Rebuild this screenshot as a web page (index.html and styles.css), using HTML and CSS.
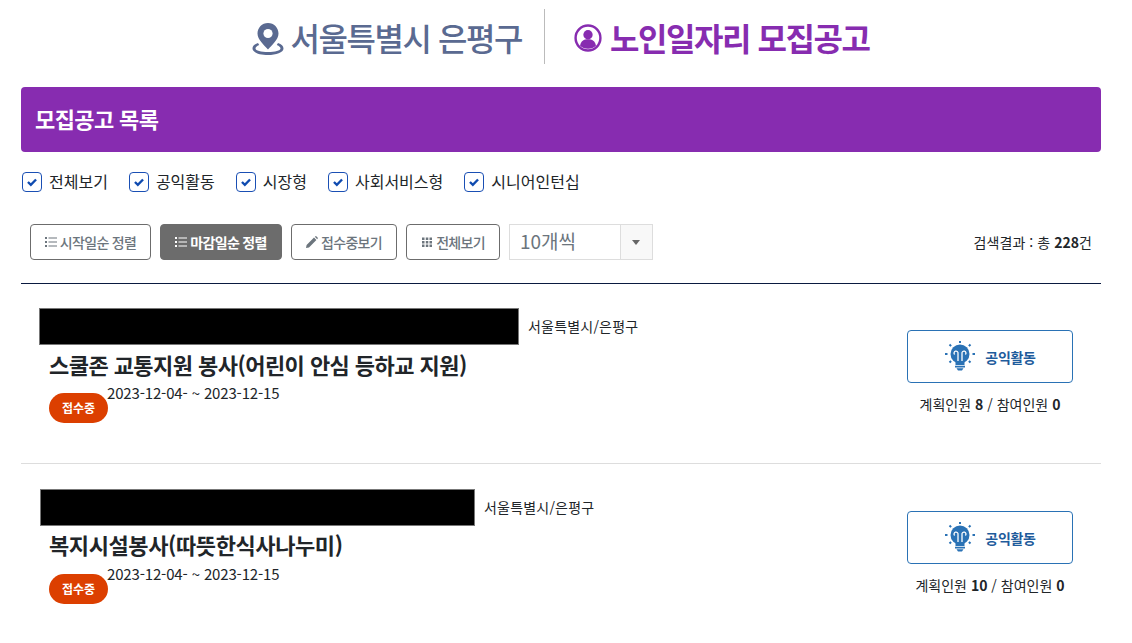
FILE: index.html
```html
<!DOCTYPE html>
<html lang="ko">
<head>
<meta charset="utf-8">
<title>노인일자리 모집공고</title>
<link rel="stylesheet" href="styles.css">
</head>
<body>
<header class="top">
  <div class="top-side top-region">
    <svg class="ico-pin" viewBox="0 0 32 32"><path d="M16 0C10 0 5.500 4.700 5.500 10.500 5.500 16.500 12 22 16 26.500 20 22 26.500 16.500 26.500 10.500 26.500 4.700 22 0 16 0z" fill="#5a6a91"/><circle cx="16" cy="10.500" r="4.600" fill="#fff"/><path d="M6 20C2.500 21.300 .5 23 .5 25.500.500 29.500 8 32 16 32s15.500-2.500 15.500-6.500c0-2.500-2-4.200-5.500-5.500l-1.200 2c2.500 1 3.700 2.200 3.700 3.500 0 2-5.500 3.500-12.500 3.500S3.500 27.500 3.500 25.500c0-1.300 1.200-2.500 3.700-3.500z" fill="#5a6a91"/></svg>
    <span>서울특별시 은평구</span>
  </div>
  <div class="top-sep"></div>
  <div class="top-side top-title">
    <svg class="ico-user" viewBox="0 0 30 30"><circle cx="15" cy="15" r="13.300" fill="none" stroke="#872cb0" stroke-width="2.600"/><circle cx="15" cy="11.500" r="5" fill="#872cb0"/><path d="M6.500 23.200c.8-4.800 4-6.800 8.500-6.800s7.700 2 8.500 6.800c-2 2-5 3.200-8.500 3.200S8.500 25.200 6.500 23.200z" fill="#872cb0"/></svg>
    <span>노인일자리 모집공고</span>
  </div>
</header>

<main class="wrap">
  <h2 class="bar">모집공고 목록</h2>

  <div class="checks">
    <label class="check"><span class="box"><svg viewBox="0 0 20 20"><path d="M5.500 10l3.200 3.200 5.800-6" fill="none" stroke="#0f4bb0" stroke-width="2.600"/></svg></span>전체보기</label>
    <label class="check"><span class="box"><svg viewBox="0 0 20 20"><path d="M5.500 10l3.200 3.200 5.800-6" fill="none" stroke="#0f4bb0" stroke-width="2.600"/></svg></span>공익활동</label>
    <label class="check"><span class="box"><svg viewBox="0 0 20 20"><path d="M5.500 10l3.200 3.200 5.800-6" fill="none" stroke="#0f4bb0" stroke-width="2.600"/></svg></span>시장형</label>
    <label class="check"><span class="box"><svg viewBox="0 0 20 20"><path d="M5.500 10l3.200 3.200 5.800-6" fill="none" stroke="#0f4bb0" stroke-width="2.600"/></svg></span>사회서비스형</label>
    <label class="check"><span class="box"><svg viewBox="0 0 20 20"><path d="M5.500 10l3.200 3.200 5.800-6" fill="none" stroke="#0f4bb0" stroke-width="2.600"/></svg></span>시니어인턴십</label>
  </div>

  <div class="tools">
    <button class="btn btn-a"><svg class="bi" viewBox="0 0 12 12"><path d="M0 1h2v2H0zM0 5h2v2H0zM0 9h2v2H0zM3.500 1.500H12v1H3.500zM3.500 5.500H12v1H3.500zM3.500 9.500H12v1H3.500z"/></svg>시작일순 정렬</button>
    <button class="btn btn-b on"><svg class="bi" viewBox="0 0 12 12"><path d="M0 1h2v2H0zM0 5h2v2H0zM0 9h2v2H0zM3.500 1.500H12v1H3.500zM3.500 5.500H12v1H3.500zM3.500 9.500H12v1H3.500z"/></svg>마감일순 정렬</button>
    <button class="btn btn-c"><svg class="bi" viewBox="0 0 12 12"><path d="M0 12l.6-3L8 1.600 10.400 4 3 11.400zM8.800.8L10 0l2 2-.8 1.200z"/></svg>접수중보기</button>
    <button class="btn btn-d"><svg class="bi" viewBox="0 0 12 12"><path d="M1 1.500h2.500V4H1zM4.800 1.500h2.500V4H4.800zM8.500 1.500H11V4H8.500zM1 5h2.500v2.500H1zM4.800 5h2.500v2.500H4.800zM8.500 5H11v2.500H8.500zM1 8.500h2.500V11H1zM4.800 8.500h2.500V11H4.800zM8.500 8.500H11V11H8.500z"/></svg>전체보기</button>
    <div class="select"><span class="sel-val">10개씩</span><span class="sel-arrow"></span></div>
    <p class="total">검색결과 : 총 <b>228</b>건</p>
  </div>

  <ul class="list">
    <li class="item item-1">
      <div class="info">
        <div class="org"><span class="mask"></span><span class="place">서울특별시/은평구</span></div>
        <h3 class="name">스쿨존 교통지원 봉사(어린이 안심 등하교 지원)</h3>
        <div class="meta"><span class="badge">접수중</span><span class="date">2023-12-04- ~ 2023-12-15</span></div>
      </div>
      <div class="side">
        <div class="kind"><svg class="bulb" viewBox="0 0 32 32"><g fill="#2a72b5"><circle cx="16" cy="13" r="9.500"/><path d="M11.500 21h9v3h-9zM11 24.800h10v1.700H11zM12.500 27.200h7L18 29.500h-4z"/></g><path d="M14 20v-7.500a2 2 0 1 0-3.400 1M18 20v-7.500a2 2 0 1 1 3.400 1" fill="none" stroke="#fff" stroke-width="1.300"/><path d="M16 0v2M5.500 3.500l1.600 1.600M26.500 3.500l-1.600 1.600M1 13h2.500M28.500 13H31M5.500 21.500l1.600-1.500M26.500 21.500l-1.600-1.500" stroke="#2a72b5" stroke-width="2" fill="none"/></svg><span>공익활동</span></div>
        <p class="count">계획인원 <b>8</b> / 참여인원 <b>0</b></p>
      </div>
    </li>
    <li class="item item-2">
      <div class="info">
        <div class="org"><span class="mask"></span><span class="place">서울특별시/은평구</span></div>
        <h3 class="name">복지시설봉사(따뜻한식사나누미)</h3>
        <div class="meta"><span class="badge">접수중</span><span class="date">2023-12-04- ~ 2023-12-15</span></div>
      </div>
      <div class="side">
        <div class="kind"><svg class="bulb" viewBox="0 0 32 32"><g fill="#2a72b5"><circle cx="16" cy="13" r="9.500"/><path d="M11.500 21h9v3h-9zM11 24.800h10v1.700H11zM12.500 27.200h7L18 29.500h-4z"/></g><path d="M14 20v-7.500a2 2 0 1 0-3.400 1M18 20v-7.500a2 2 0 1 1 3.400 1" fill="none" stroke="#fff" stroke-width="1.300"/><path d="M16 0v2M5.500 3.500l1.600 1.600M26.500 3.500l-1.600 1.600M1 13h2.500M28.500 13H31M5.500 21.500l1.600-1.500M26.500 21.500l-1.600-1.500" stroke="#2a72b5" stroke-width="2" fill="none"/></svg><span>공익활동</span></div>
        <p class="count">계획인원 <b>10</b> / 참여인원 <b>0</b></p>
      </div>
    </li>
  </ul>
</main>
</body>
</html>
```
FILE: styles.css
```css
* { box-sizing: border-box; }
html, body { height: 643px; overflow: hidden; }
body {
  margin: 0;
  background: #fff;
  color: #212529;
  font-family: "Noto Sans CJK KR", "Noto Sans", sans-serif;
  font-size: 14px;
}
.top {
  display: flex;
  justify-content: center;
  align-items: center;
  height: 73px;
  padding-right: 11px;
}
.top-side { display: flex; align-items: center; font-size: 32px; letter-spacing: -1.45px; font-weight: 500; line-height: 40px; }
.top-region { color: #5a6a91; gap: 7px; }
.top-title { color: #872cb0; gap: 8px; font-weight: 700; }
.top-sep { width: 1px; height: 55px; background: #bbb; margin: 0 29px 0 22px; }
.ico-pin { width: 32px; height: 32px; margin-top: 4px; }
.ico-user { width: 28px; height: 28px; margin-top: 2px; }
.wrap { margin: 14px 31px 0 21px; }
.bar {
  margin: 0;
  height: 65px;
  background: #872cb0;
  color: #fff;
  border-radius: 4px;
  padding: 0 14px;
  font-size: 22px;
  font-weight: 700;
  line-height: 63px;
  letter-spacing: -0.6px;
}
.checks { display: flex; margin-top: 19px; height: 21px; font-size: 16px; padding-left: 1px; }
.check { display: flex; align-items: center; gap: 7px; margin-right: 21px; color: #212529; line-height: 21px; }
.box { width: 20px; height: 20px; border: 1px solid #1a4fb4; border-radius: 4px; display: block; }
.box svg { display: block; width: 18px; height: 18px; }
.tools { display: flex; align-items: center; margin-top: 32px; height: 36px; padding-left: 9px; }
.btn {
  height: 36px;
  border: 1px solid #6c6c6c;
  border-radius: 4px;
  background: #fff;
  color: #6c757d;
  font: 500 14px "Noto Sans CJK KR", sans-serif;
  letter-spacing: -0.7px;
  display: flex;
  align-items: center;
  justify-content: center;
  padding: 0;
  margin-right: 9px;
}
.btn-a { width: 121px; }
.btn-b { width: 122px; }
.btn-c { width: 106px; }
.btn-d { width: 94px; }
.on { background: #6c6c6c; color: #fff; font-weight: 700; }
.bi { width: 12px; height: 12px; margin-right: 3px; fill: currentColor; }
.select { display: flex; width: 144px; height: 36px; border: 1px solid #ddd; margin-right: auto; }
.sel-val { flex: 1; font-size: 19px; color: #6c757d; line-height: 32px; padding-left: 10px; }
.sel-arrow { width: 32px; background: #f8f8f8; border-left: 1px solid #ddd; position: relative; }
.sel-arrow::after {
  content: "";
  position: absolute;
  left: 11px;
  top: 15px;
  border: 4px solid transparent;
  border-top: 5px solid #666;
  border-bottom: 0;
}
.total { margin: 0 9px 0 0; font-size: 14px; letter-spacing: 0.05px; color: #212529; }
.total b { font-weight: 700; }
.list { list-style: none; margin: 23px 0 0; padding: 0; border-top: 1px solid #0a1a40; }
.item { display: flex; justify-content: space-between; }
.item-1 { height: 180px; border-bottom: 1px solid #ddd; padding-top: 24px; }
.item-2 { padding-top: 25px; }
.item-2 .info { padding-left: 19px; }
.info { padding-left: 18px; }
.org { display: flex; align-items: center; height: 37px; }
.mask { display: block; height: 37px; background: #000; border: 1px solid #777; width: 480px; margin-right: 9px; }
.item-2 .mask { width: 435px; }
.place { font-size: 14px; color: #212529; padding-bottom: 1px; letter-spacing: 0.2px; }
.name { margin: 2px 0 0 10px; font-size: 22px; line-height: 34px; font-weight: 700; color: #212529; letter-spacing: -0.55px; }
.item-2 .name { margin: 1px 0 0 9px; letter-spacing: -0.4px; }
.meta { display: flex; align-items: flex-start; margin: 3px 0 0 10px; }
.item-2 .meta { margin: 4px 0 0 9px; }
.badge {
  margin-top: 9px;
  width: 59px;
  height: 30px;
  border-radius: 15px;
  background: #dc3f00;
  color: #fff;
  font-size: 12px;
  font-weight: 700;
  line-height: 29px;
  text-align: center;
}
.date { margin: -1px 0 0 -1px; font-size: 15px; line-height: 20px; color: #212529; letter-spacing: -0.15px; }
.side { width: 166px; margin: 22px 28px 0 0; text-align: center; }
.kind {
  height: 53px;
  border: 1px solid #2a72b5;
  border-radius: 4px;
  display: flex;
  align-items: center;
  justify-content: center;
  gap: 9px;
  color: #1f5c9c;
  font-size: 14px;
  letter-spacing: -0.3px;
  font-weight: 700;
}
.bulb { width: 32px; height: 32px; }
.count { margin: 11px -20px 0; font-size: 14px; line-height: 20px; color: #212529; white-space: nowrap; }
.count b { font-weight: 700; }
```
